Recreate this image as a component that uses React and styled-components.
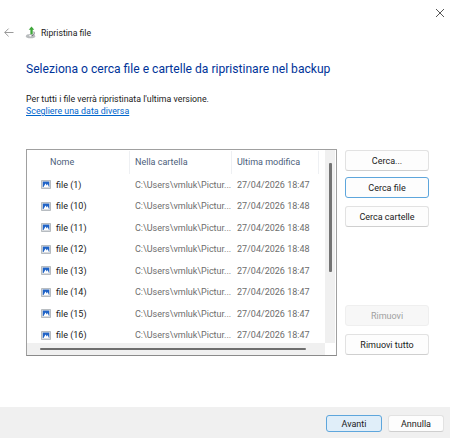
import styled, { createGlobalStyle } from "styled-components";

const Global = createGlobalStyle`
  html, body { margin: 0; padding: 0; background: #fff; }
  body { font-family: Roboto, "Open Sans", "Liberation Sans", sans-serif; }
`;
const Win = styled.div`
  width: 450px;
  height: 438px;
  display: flex;
  flex-direction: column;
  overflow: hidden;
  background: #fff;
  position: relative;
`;
const CloseBtn = styled.div`
  position: absolute;
  top: 3px;
  right: 5px;
  width: 10px;
  height: 10px;
`;
const TitleBar = styled.div`
  display: flex;
  align-items: center;
  height: 13px;
  margin-top: 26px;
  padding-left: 4px;
`;
const WinTitle = styled.span`
  font-size: 8.7px;
  color: #1a1a1a;
  margin-left: 3px;
`;
const Main = styled.div`
  padding: 0 6px 0 26px;
  flex: 1;
`;
const Heading = styled.h1`
  margin: 22px 0 0;
  font-size: 12.1px;
  line-height: 17px;
  font-weight: 400;
  color: #003399;
`;
const Info = styled.p`
  margin: 15px 0 0;
  font-size: 8.8px;
  line-height: 12px;
  color: #1a1a1a;
`;
const Link = styled.a`
  display: block;
  font-size: 8.85px;
  line-height: 12px;
  color: #0066cc;
  text-decoration: underline;
`;
const Body = styled.div`
  display: flex;
  gap: 8px;
  margin-top: 32px;
`;
const ListBox = styled.div`
  width: 311px;
  height: 207px;
  box-sizing: border-box;
  border: 1px solid #a0a0a0;
  border-bottom-color: #8a8a8a;
  display: grid;
  grid-template-columns: 1fr 11px;
  grid-template-rows: 1fr 12px;
  background: #fff;
`;
const Rows = styled.div`
  overflow: hidden;
`;
const HeaderRow = styled.div`
  display: grid;
  grid-template-columns: 103px 102px 87px;
  height: 23px;
  padding-top: 1px;
`;
const HeadCell = styled.div`
  font-size: 9px;
  line-height: 22px;
  color: #4c607a;
  padding-left: ${(p) => p.$pad || 5}px;
  border-right: 1px solid #eef0f3;
`;
const Row = styled.div`
  display: grid;
  grid-template-columns: 103px 102px 87px;
  height: 21.5px;
  align-items: center;
  font-size: 9px;
  white-space: nowrap;
`;
const NameCell = styled.div`
  display: flex;
  align-items: center;
  gap: 5px;
  padding-left: 14px;
  color: #1a1a1a;
`;
const PathCell = styled.div`
  padding-left: 5px;
  color: #6d6d6d;
`;
const VTrack = styled.div`
  background: #f0f0f0;
  display: flex;
  justify-content: center;
  padding-top: 13px;
  margin-right: 1px;
`;
const VThumb = styled.div`
  width: 3px;
  height: 109px;
  background: #747474;
  border-radius: 1px;
`;
const HTrack = styled.div`
  background: #f0f0f0;
  padding: 5px 19px 0 13px;
`;
const HThumb = styled.div`
  height: 2px;
  background: #6e6e6e;
  border-radius: 1px;
`;
const Corner = styled.div`
  background: #fff;
`;
const Side = styled.div`
  width: 84px;
  height: 207px;
  display: flex;
  flex-direction: column;
  padding-top: 1px;
  box-sizing: border-box;
`;
const Btn = styled.button`
  box-sizing: border-box;
  width: ${(p) => p.$w || 84}px;
  height: ${(p) => p.$h || 21}px;
  margin: 0;
  margin-top: ${(p) => p.$top || 0}px;
  padding: 0;
  font-family: inherit;
  font-size: 9px;
  border-radius: 3px;
  color: ${(p) => (p.disabled ? "#a0a0a0" : "#1a1a1a")};
  background: ${(p) => (p.$primary ? "#e0eef9" : p.$focus ? "#fdfdfd" : p.disabled ? "#f7f7f7" : "#fdfdfd")};
  border: 1px solid ${(p) => (p.$primary || p.$focus ? "#5ea6dc" : p.disabled ? "#efefef" : "#e2e2e2")};
  border-bottom-color: ${(p) => (p.$primary || p.$focus ? "#5ea6dc" : p.disabled ? "#efefef" : "#cfcfcf")};
`;
const Footer = styled.div`
  height: 31px;
  background: #f0f0f0;
  display: flex;
  justify-content: flex-end;
  gap: 6px;
  padding: 8px 6px 0 0;
  box-sizing: border-box;
`;

const BackArrow = () => (
  <svg width="10" height="9" viewBox="0 0 10 9" fill="none" stroke="#8f8f8f" strokeWidth="0.9">
    <path d="M9.5 4.5H0.8M4.6 0.6L0.7 4.5l3.9 3.9" />
  </svg>
);

const RestoreIcon = () => (
  <svg width="13" height="13" viewBox="0 0 14 14" style={{ marginLeft: 11 }}>
    <ellipse cx="6" cy="11" rx="5" ry="2.3" fill="#b9bcbe" />
    <ellipse cx="6" cy="10.6" rx="1.6" ry="0.8" fill="#fff" />
    <path d="M9.5 6c1 2 .4 4-2.5 4.6" fill="none" stroke="#6b6f73" strokeWidth="1" />
    <path d="M7 .5L10 4H8.3v5H5.8V4H4z" fill="#3ea63a" />
  </svg>
);

const FileIcon = () => (
  <svg width="10" height="9" viewBox="0 0 10 9">
    <rect x="0.4" y="0.4" width="9.2" height="8.2" rx="0.5" fill="#d9dce0" stroke="#9aa0a6" strokeWidth="0.7" />
    <rect x="1.8" y="1.6" width="6.4" height="5.4" fill="#1f63c7" />
    <path d="M2.5 7l2-3.4 1.3 1.8L6.6 4 8 7z" fill="#fff" />
  </svg>
);

const files = [
  ["file (1)", "18:47"],
  ["file (10)", "18:48"],
  ["file (11)", "18:48"],
  ["file (12)", "18:48"],
  ["file (13)", "18:47"],
  ["file (14)", "18:47"],
  ["file (15)", "18:47"],
  ["file (16)", "18:47"],
];

export default function App() {
  return (
    <Win>
      <Global />
      <CloseBtn>
        <svg width="10" height="10" viewBox="0 0 10 10" stroke="#444" strokeWidth="0.9">
          <path d="M1 1l8 8M9 1L1 9" />
        </svg>
      </CloseBtn>
      <TitleBar>
        <BackArrow />
        <RestoreIcon />
        <WinTitle>Ripristina file</WinTitle>
      </TitleBar>
      <Main>
        <Heading>Seleziona o cerca file e cartelle da ripristinare nel backup</Heading>
        <Info>Per tutti i file verrà ripristinata l'ultima versione.</Info>
        <Link>Scegliere una data diversa</Link>
        <Body>
          <ListBox>
            <Rows>
              <HeaderRow>
                <HeadCell $pad={23}>Nome</HeadCell>
                <HeadCell>Nella cartella</HeadCell>
                <HeadCell>Ultima modifica</HeadCell>
              </HeaderRow>
              {files.map(([name, time]) => (
                <Row key={name}>
                  <NameCell>
                    <FileIcon />
                    {name}
                  </NameCell>
                  <PathCell>C:\Users\vmluk\Pictur...</PathCell>
                  <PathCell>27/04/2026 {time}</PathCell>
                </Row>
              ))}
            </Rows>
            <VTrack>
              <VThumb />
            </VTrack>
            <HTrack>
              <HThumb />
            </HTrack>
            <Corner />
          </ListBox>
          <Side>
            <Btn>Cerca...</Btn>
            <Btn $focus $top={6}>Cerca file</Btn>
            <Btn $top={8}>Cerca cartelle</Btn>
            <Btn disabled $top={78}>Rimuovi</Btn>
            <Btn $top={8}>Rimuovi tutto</Btn>
          </Side>
        </Body>
      </Main>
      <Footer>
        <Btn $primary $w={56} $h={17}>Avanti</Btn>
        <Btn $w={56} $h={17}>Annulla</Btn>
      </Footer>
    </Win>
  );
}
